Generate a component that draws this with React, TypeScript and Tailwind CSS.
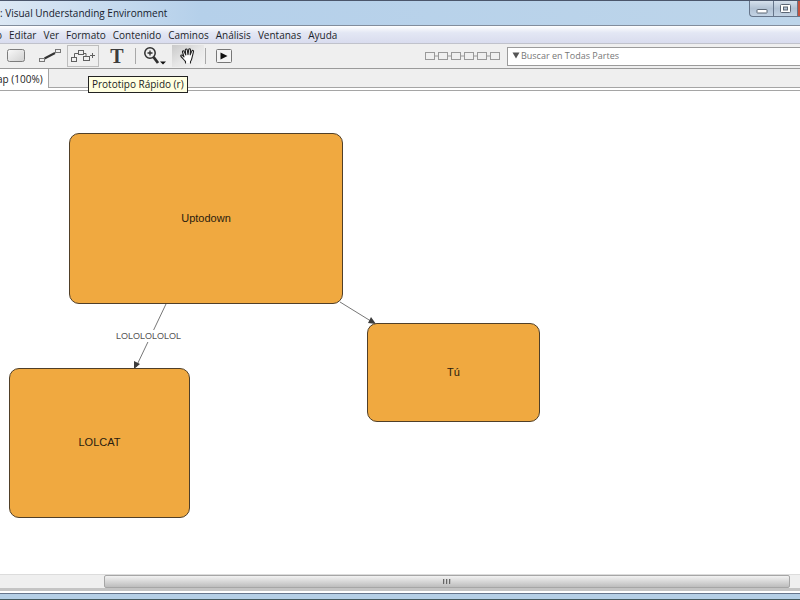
import type { ReactNode } from "react";

const menus = ["o", "Editar", "Ver", "Formato", "Contenido", "Caminos", "Análisis", "Ventanas", "Ayuda"];

const nodes = [
  { id: "uptodown", label: "Uptodown", box: "left-[69px] top-[42px] w-[274px] h-[171px]" },
  { id: "tu", label: "Tú", box: "left-[367px] top-[232px] w-[173px] h-[99px]" },
  { id: "lolcat", label: "LOLCAT", box: "left-[9px] top-[277px] w-[181px] h-[150px]" },
];

function ToolButton({ label, className = "", children }: { label: string; className?: string; children: ReactNode }) {
  return (
    <button type="button" aria-label={label} className={`flex h-[22px] shrink-0 items-center justify-center ${className}`}>
      {children}
    </button>
  );
}

function Separator() {
  return <div className="h-4 w-px shrink-0 bg-[#a8a8a8]" />;
}

function TitleBar() {
  return (
    <header className="flex h-[26px] shrink-0 items-start justify-between border-t border-b border-t-[#4b566b] border-b-[#828d9c] bg-linear-to-r from-[#dce8f4] via-[#b5d0ea] via-25% to-[#bdd5ea]">
      <h1 className="pt-1 text-[10px] leading-4 text-[#16202c]">: Visual Understanding Environment</h1>
      <div className="flex h-4 overflow-hidden rounded-bl border-b border-l border-[#66758a] bg-linear-to-b from-[#d5e0ec] via-[#b2c2d4] to-[#c3d3e4]">
        <button type="button" aria-label="Minimizar" className="flex w-6 items-center justify-center border-r border-[#66758a]">
          <svg width="12" height="12" viewBox="0 0 12 12">
            <rect x="1" y="6.500" width="10" height="3.500" rx="0.500" fill="#fff" stroke="#5b6675" />
          </svg>
        </button>
        <button type="button" aria-label="Restaurar" className="flex w-6 items-center justify-center border-r border-[#66758a]">
          <svg width="12" height="12" viewBox="0 0 12 12">
            <rect x="0.500" y="1.500" width="10" height="8" rx="1" fill="#fff" stroke="#5b6675" />
            <rect x="3.500" y="4" width="4" height="3" fill="#b2c2d4" stroke="#5b6675" />
          </svg>
        </button>
        <button type="button" aria-label="Cerrar" className="w-[2px] bg-[#c4523f]" />
      </div>
    </header>
  );
}

function MenuBar() {
  return (
    <nav className="-ml-1 flex h-[18px] shrink-0 items-center gap-[7px] border-b border-[#c0c2cb] bg-linear-to-b from-white via-[#e3e7f4] via-40% to-[#d9dcee] text-[10px] leading-4 text-[#1c1f2a]">
      {menus.map((m) => (
        <button type="button" key={m}>{m}</button>
      ))}
    </nav>
  );
}

function Toolbar() {
  return (
    <div className="flex h-[25px] shrink-0 items-center border-b border-[#9a9a9a] bg-[#efefef]">
      <ToolButton label="Nodo" className="w-8">
        <svg width="20" height="16" viewBox="0 0 20 16">
          <defs>
            <linearGradient id="nodeFill" x1="0" y1="0" x2="1" y2="1">
              <stop offset="0" stopColor="#fafafa" />
              <stop offset="1" stopColor="#d0d0d0" />
            </linearGradient>
          </defs>
          <rect x="1.500" y="1.500" width="17" height="12" rx="2" fill="url(#nodeFill)" stroke="#7d7d7d" />
        </svg>
      </ToolButton>
      <ToolButton label="Enlace" className="w-[35px]">
        <svg width="26" height="16" viewBox="0 0 26 16" fill="none">
          <path d="M7.500 10.500 18 5" stroke="#333" strokeWidth="2" />
          <rect x="2.500" y="10.500" width="5" height="3" stroke="#777" />
          <rect x="18.500" y="1.500" width="5" height="3" stroke="#777" />
        </svg>
      </ToolButton>
      <ToolButton label="Prototipo Rápido" className="w-8 border border-[#bdbdbd]">
        <svg width="26" height="16" viewBox="0 0 26 16" fill="none" stroke="#5f5f5f">
          <rect x="1.500" y="9.500" width="5" height="4" />
          <rect x="8.500" y="2.500" width="5" height="4" />
          <rect x="13.500" y="8.500" width="6" height="4" />
          <path d="M4.500 9.500V5.500h4M13.500 5.500h2.500v3M20 7.500h5M22.500 5v5" />
        </svg>
      </ToolButton>
      <ToolButton label="Texto" className="w-9">
        <span className="font-['Liberation_Serif',serif] text-[20px] leading-5 font-bold text-[#3c3c3c]">T</span>
      </ToolButton>
      <Separator />
      <ToolButton label="Zoom" className="w-9">
        <svg width="24" height="20" viewBox="0 0 24 20" fill="none" stroke="#2f2f2f">
          <circle cx="8" cy="7" r="5.200" strokeWidth="1.500" />
          <path d="M5.500 7h5M8 4.500v5" strokeWidth="1.300" />
          <path d="m11.500 11 4.500 6" strokeWidth="2.800" />
          <path d="M18 15.500h6L21 18.500z" fill="#111" stroke="none" />
        </svg>
      </ToolButton>
      <ToolButton label="Mano" className="mr-px w-8 bg-linear-to-br from-[#c9c9c9] via-[#e6e6e6] to-[#f4f4f4]">
        <svg width="18" height="18" viewBox="0 0 18 18" fill="#fff" stroke="#222" strokeWidth="1.100" strokeLinejoin="round" strokeLinecap="round">
          <path d="M6.500 16v-1.500C5 13 3.500 11 2 9.500c-.8-1 .5-2 1.500-1.200L5 9.800 3.500 5c-.3-1.300 1.300-1.700 1.700-.5L6.800 8 6.300 3c0-1.300 1.700-1.400 1.900-.1L9 7.600l.7-5c.2-1.200 1.900-1 1.800.3l-.3 5 1.700-4c.5-1 2-.5 1.600.8l-1.400 5.600c-.3 1.800-.7 3-1.600 4.200V16" />
        </svg>
      </ToolButton>
      <Separator />
      <ToolButton label="Presentación" className="w-9">
        <svg width="18" height="16" viewBox="0 0 18 16">
          <rect x="1.500" y="1.500" width="15" height="13" rx="1" fill="#f4f4f4" stroke="#777" />
          <path d="M5.500 4.500v7l7-3.500z" fill="#111" />
        </svg>
      </ToolButton>
      <svg className="ml-auto shrink-0" width="76" height="10" viewBox="0 0 76 10" fill="none" stroke="#999">
        <rect x="0.500" y="1.500" width="9" height="7" />
        <rect x="13.500" y="1.500" width="9" height="7" />
        <rect x="26.500" y="1.500" width="9" height="7" />
        <rect x="39.500" y="1.500" width="9" height="7" />
        <rect x="52.500" y="1.500" width="9" height="7" />
        <rect x="65.500" y="1.500" width="9" height="7" />
        <path d="M10 5h3M23 5h3M36 5h3M49 5h3M62 5h3" />
      </svg>
      <label className="ml-[6px] flex h-[19px] w-[293px] items-center border border-r-0 border-[#9b9b9b] bg-white pl-1">
        <svg className="mr-px shrink-0" width="8" height="8" viewBox="0 0 8 8">
          <path d="M0.500 0.500h7L4 6.500z" fill="#555" />
        </svg>
        <input
          type="text"
          aria-label="Buscar en Todas Partes"
          placeholder="Buscar en Todas Partes"
          className="min-w-0 flex-1 text-[9px] leading-4 outline-none placeholder:text-[#777]"
        />
      </label>
    </div>
  );
}

function TabStrip() {
  return (
    <div className="flex h-[22px] shrink-0 flex-col border-b border-[#a5a5a5] bg-white">
      <div className="flex h-[19px] border-b border-[#a5a5a5] bg-[#efefef]">
        <button type="button" className="-mb-px -ml-[3px] h-[19px] border-r border-[#a5a5a5] bg-white pr-[5px] text-[10px] leading-4 text-[#222]">
          ap (100%)
        </button>
      </div>
    </div>
  );
}

function ConceptMap() {
  return (
    <main className="relative min-h-0 flex-1 overflow-hidden bg-white font-['Liberation_Sans',sans-serif]">
      <svg className="absolute top-0 left-0 h-full w-full">
        <path d="M166 213 136 276M340 211l34 21" stroke="#777" fill="none" />
        <path d="m134 278 0-8 6 3zM376 233l-8-1 3-6z" fill="#3d3d3d" />
      </svg>
      {nodes.map((n) => (
        <div
          key={n.id}
          className={`absolute flex items-center justify-center rounded-[10px] border border-[#503f28] bg-[#f0a940] pb-[2px] text-[11px] leading-4 text-[#29200f] ${n.box}`}
        >
          {n.label}
        </div>
      ))}
      <span className="absolute top-[239px] left-[116px] bg-white text-[9px] leading-3 text-[#555]">LOLOLOLOLOL</span>
    </main>
  );
}

function HorizontalScroll() {
  return (
    <div className="flex h-[14px] shrink-0 border-t border-[#dcdcdc] bg-[#efefef]">
      <div className="w-[13%] shrink-0" />
      <div className="flex flex-1 items-center justify-center gap-px rounded-[2px] border border-[#a6a6a6] bg-linear-to-b from-[#f2f2f2] to-[#bdbdbd]">
        {[0, 1, 2].map((i) => (
          <span key={i} className="h-[5px] w-[2px] border-l border-[#666] bg-[#bbb]" />
        ))}
      </div>
      <div className="w-[10px] shrink-0" />
    </div>
  );
}

export default function App() {
  return (
    <div className="flex h-screen flex-col overflow-hidden bg-white font-['Open_Sans',sans-serif]">
      <TitleBar />
      <MenuBar />
      <Toolbar />
      <div className="relative flex min-h-0 flex-1 flex-col">
        <TabStrip />
        <ConceptMap />
        <div role="tooltip" className="absolute top-[7px] left-[88px] border border-[#222] bg-[#ffffe1] px-[3px] text-[10px] leading-[15px] text-[#222]">
          Prototipo Rápido (r)
        </div>
      </div>
      <HorizontalScroll />
      <footer className="h-3 shrink-0 border-t-[3px] border-b border-t-[#c4c4c4] border-b-[#44595e] bg-white pt-[2px]">
        <div className="h-[6px] border-t border-[#66758c] bg-[#b5cfe6]" />
      </footer>
    </div>
  );
}
